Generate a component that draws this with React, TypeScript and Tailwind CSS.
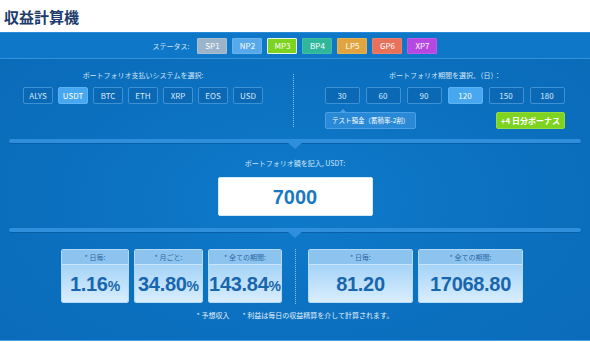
import React from "react";

const statuses = [
  { label: "SP1", cls: "bg-[#9cb4ca] border-[#a9bfd3]" },
  { label: "NP2", cls: "bg-[#58a9ea] border-[#68b3ee]" },
  { label: "MP3", cls: "bg-[#7ed321] border-[#eef8e0]" },
  { label: "BP4", cls: "bg-[#2fb69b] border-[#3fbfa5]" },
  { label: "LP5", cls: "bg-[#e1a53f] border-[#e6b055]" },
  { label: "GP6", cls: "bg-[#e8715c] border-[#ec806d]" },
  { label: "XP7", cls: "bg-[#b647e0] border-[#bf5ae5]" },
];

const currencies = ["ALYS", "USDT", "BTC", "ETH", "XRP", "EOS", "USD"];
const periods = ["30", "60", "90", "120", "150", "180"];

const font = "font-['Noto_Sans_CJK_JP','Noto_Sans',sans-serif]";

function Divider() {
  return (
    <div className="relative mx-[9px] h-[4px] rounded-full bg-[#2f8fdc] shadow-[0_1px_0_#075fa8]">
      <svg
        className="absolute left-1/2 top-[3px] -translate-x-1/2"
        width="16"
        height="7"
        viewBox="0 0 16 7"
      >
        <polygon points="0,0 16,0 8,7" fill="#2f8fdc" />
      </svg>
    </div>
  );
}

function DottedLine({ h }: { h: string }) {
  return <div className={`w-0 border-l border-dotted border-[#8cc3ee] ${h}`} />;
}

function ResultCard({
  title,
  value,
  unit,
  w,
}: {
  title: string;
  value: string;
  unit?: string;
  w: string;
}) {
  return (
    <div
      className={`${w} h-[54px] flex flex-col rounded-[2px] border border-[#b5daf7] overflow-hidden`}
    >
      <div className="h-[15px] bg-[#8cc4ef] border-b border-[#c9e5fa] flex items-center justify-center text-[7px] text-[#2a68a6] leading-none">
        * {title}:
      </div>
      <div className="flex-1 bg-gradient-to-b from-[#a5d3f7] to-[#d9eefd] flex items-center justify-center text-[#1866ae] font-['Liberation_Sans',sans-serif] font-bold">
        <span className="text-[20px] leading-none tracking-[-0.3px]">{value}</span>
        {unit && <span className="text-[14px] leading-none mt-[4px]">{unit}</span>}
      </div>
    </div>
  );
}

export default function App() {
  return (
    <div className={`w-[590px] h-[342px] bg-white ${font} overflow-hidden`}>
      <div className="h-[32px] flex items-center px-[4px]">
        <h1 className="text-[15px] font-bold text-[#1d3b6d] leading-none">収益計算機</h1>
      </div>

      <div className="h-[309px] border-b border-[#4aa2e6] bg-[radial-gradient(ellipse_at_50%_55%,#0f7aca_0%,#0b70bf_55%,#0a6ab8_100%)] flex flex-col">
        {/* status row */}
        <div className="h-[27px] bg-[#0e77c7] border-t border-[#2a8ad6] border-b border-b-[#3591da] flex items-center justify-center gap-[5px] pt-[1px]">
          <span className="text-[7px] text-[#d2e6f7] mr-[3px]">ステータス:</span>
          {statuses.map((s) => (
            <div
              key={s.label}
              className={`w-[30px] h-[16px] border rounded-[1px] flex items-center justify-center text-[8px] text-white ${s.cls}`}
            >
              {s.label}
            </div>
          ))}
        </div>

        {/* selectors */}
        <div className="flex h-[80px] pt-[13px]">
          <div className="w-[286px] flex flex-col items-center">
            <div className="text-[7px] text-[#d2e6f7] leading-none h-[8px]">
              ポートフォリオ支払いシステムを選択:
            </div>
            <div className="flex gap-[5px] mt-[7px]">
              {currencies.map((c) => (
                <div
                  key={c}
                  className={`w-[30px] h-[17px] rounded-[2px] border flex items-center justify-center text-[8px] ${
                    c === "USDT"
                      ? "bg-[#47a8f1] border-[#5cb3f3] text-white"
                      : "bg-[#0a68b5] border-[#3d92d6] text-[#d8ebfa]"
                  }`}
                >
                  {c}
                </div>
              ))}
            </div>
          </div>
          <div className="w-[14px] flex justify-center pt-[2px]">
            <DottedLine h="h-[53px]" />
          </div>
          <div className="flex-1 flex flex-col items-center">
            <div className="text-[7px] text-[#d2e6f7] leading-none h-[8px]">
              ポートフォリオ期間を選択、（日）：
            </div>
            <div className="flex gap-[6px] mt-[7px] pr-[1px]">
              {periods.map((p) => (
                <div
                  key={p}
                  className={`w-[35px] h-[17px] rounded-[2px] border flex items-center justify-center text-[8px] ${
                    p === "120"
                      ? "bg-[#47a8f1] border-[#5cb3f3] text-white"
                      : "bg-[#0a68b5] border-[#3d92d6] text-[#d8ebfa]"
                  }`}
                >
                  {p}
                </div>
              ))}
            </div>
            <div className="w-[240px] flex justify-between mt-[8px]">
              <div className="relative w-[91px] h-[17px] bg-[#2a89d6] border border-[#4aa0e4] rounded-[2px] flex items-center pl-[6px] text-[6.5px] text-white">
                <svg
                  className="absolute -top-[4px] left-[13px]"
                  width="8"
                  height="4"
                  viewBox="0 0 8 4"
                >
                  <polygon points="0,4 4,0 8,4" fill="#4aa0e4" />
                </svg>
                テスト預金（蓄積率-2割）
              </div>
              <div className="w-[69px] h-[17px] bg-[#7ed321] border border-[#92dc43] rounded-[2px] flex items-center justify-center text-[8px] font-bold text-white">
                +4 日分ボーナス
              </div>
            </div>
          </div>
        </div>

        <Divider />

        {/* amount input */}
        <div className="flex flex-col items-center pt-[17px]">
          <div className="text-[7px] text-[#d2e6f7] leading-none">
            ポートフォリオ額を記入, USDT:
          </div>
          <div className="mt-[10px] w-[155px] h-[39px] bg-white rounded-[2px] border border-[#d7e9f7] flex items-center justify-center text-[20px] font-bold text-[#1a78c3] font-['Liberation_Sans',sans-serif]">
            7000
          </div>
        </div>

        <div className="mt-[12px]">
          <Divider />
        </div>

        {/* results */}
        <div className="flex items-start pl-[61px] mt-[17px]">
          <div className="flex gap-[5px]">
            <ResultCard title="日毎" value="1.16" unit="%" w="w-[68px]" />
            <ResultCard title="月ごと" value="34.80" unit="%" w="w-[69px]" />
            <ResultCard title="全ての期間" value="143.84" unit="%" w="w-[74px]" />
          </div>
          <div className="w-[25px] flex justify-center ml-[1px]">
            <DottedLine h="h-[55px]" />
          </div>
          <div className="flex gap-[5px]">
            <ResultCard title="日毎" value="81.20" w="w-[105px]" />
            <ResultCard title="全ての期間" value="17068.80" w="w-[105px]" />
          </div>
        </div>

        <div className="flex justify-center gap-[13px] mt-[8px] text-[7px] text-[#e2f0fb] leading-none">
          <span>* 予想収入</span>
          <span>* 利益は毎日の収益精算を介して計算されます。</span>
        </div>
      </div>
    </div>
  );
}
